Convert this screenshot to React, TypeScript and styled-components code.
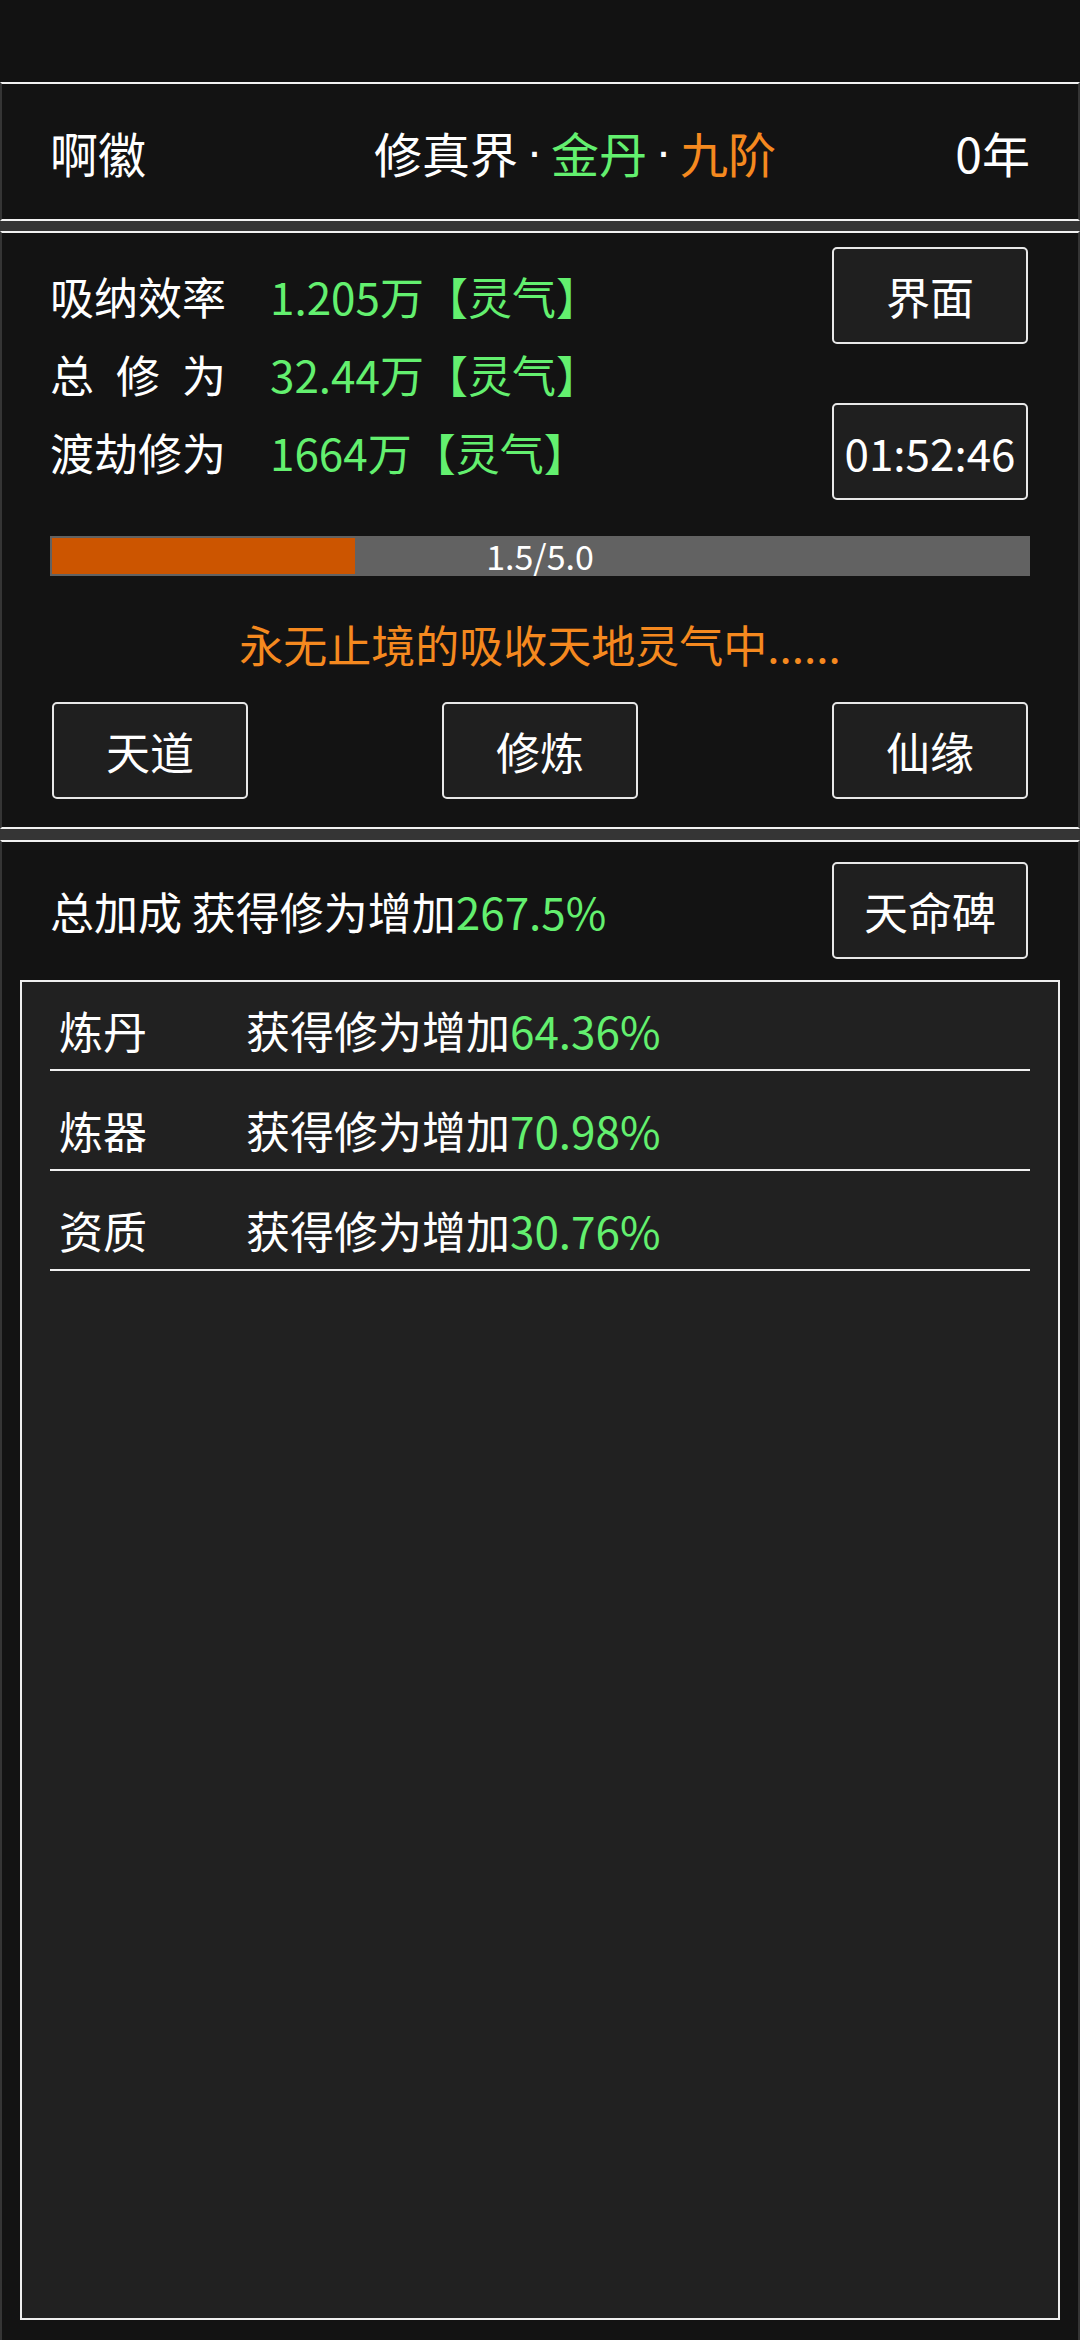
import React from "react";
import styled, { createGlobalStyle } from "styled-components";

const GREEN = "#63f06f";
const ORANGE = "#f5891f";

const GlobalStyle = createGlobalStyle`
  html, body { margin: 0; padding: 0; background: #353535; }
  body {
    font-family: "Noto Sans CJK SC", "Noto Sans", sans-serif;
    color: #ffffff;
  }
  * { box-sizing: border-box; }
`;

const Page = styled.div`
  min-height: 100vh;
  display: flex;
  flex-direction: column;
  background: #353535;
`;

const StatusBar = styled.div`
  height: 82px;
  flex-shrink: 0;
  background: #121212;
`;

const Panel = styled.section<{ $gap?: number; $open?: boolean; $grow?: boolean }>`
  margin-top: ${(p) => p.$gap ?? 0}px;
  background: #131313;
  border-top: 2px solid #f2f2f2;
  border-bottom: ${(p) => (p.$open ? "none" : "2px solid #f2f2f2")};
  border-left: 2px solid #353535;
  border-right: 2px solid #353535;
  flex-shrink: 0;
  ${(p) => (p.$grow ? "flex: 1; display: flex; flex-direction: column;" : "")}
`;

const HeaderBar = styled.header`
  height: 135px;
  padding: 0 48px;
  display: grid;
  grid-template-columns: 324px auto 1fr;
  align-items: center;
  font-size: 48px;
  line-height: 1;
`;

const Title = styled.div`
  display: flex;
  align-items: center;
  white-space: nowrap;
`;

const Tone = styled.span<{ $color?: string }>`
  color: ${(p) => p.$color ?? "#ffffff"};
`;

const Dot = styled.span`
  display: inline-flex;
  justify-content: center;
  align-items: center;
  width: 33px;
  font-family: "Liberation Sans", sans-serif;
  font-size: 48px;
  color: #ffffff;
`;

const Years = styled.div`
  justify-self: end;
`;

const CultivateBody = styled.div`
  padding: 14px 48px 28px;
  display: flex;
  flex-direction: column;
`;

const InfoRow = styled.div<{ $h: number }>`
  height: ${(p) => p.$h}px;
  display: flex;
  align-items: center;
  justify-content: space-between;
`;

const Stat = styled.div`
  display: flex;
  align-items: center;
  gap: 44px;
  font-size: 44px;
  line-height: 1;
  white-space: nowrap;
`;

const StatLabel = styled.div`
  width: 176px;
  display: flex;
  justify-content: space-between;
`;

const StatValue = styled.div`
  color: ${GREEN};
`;

const Button = styled.button`
  width: 196px;
  height: 97px;
  margin: 0 2px;
  padding: 0;
  flex-shrink: 0;
  display: flex;
  align-items: center;
  justify-content: center;
  border: 2px solid #e8e8e8;
  border-radius: 5px;
  background: #1f1f1f;
  color: #ffffff;
  font-family: inherit;
  font-size: 44px;
  line-height: 1;
`;

const Progress = styled.div`
  position: relative;
  height: 40px;
  margin-top: 36px;
  padding: 2px;
  background: #626262;
`;

const ProgressFill = styled.div`
  height: 100%;
  background: #cc5500;
`;

const ProgressLabel = styled.div`
  position: absolute;
  inset: 0;
  display: flex;
  align-items: center;
  justify-content: center;
  font-size: 34px;
  line-height: 1;
  color: #ffffff;
`;

const Message = styled.div`
  margin-top: 36px;
  line-height: 64px;
  font-size: 44px;
  text-align: center;
  color: ${ORANGE};
`;

const ButtonRow = styled.div`
  margin-top: 26px;
  display: flex;
  justify-content: space-between;
`;

const BonusBody = styled.div`
  flex: 1;
  display: flex;
  flex-direction: column;
  padding: 20px 18px;
`;

const BonusHeader = styled.div`
  height: 97px;
  padding: 0 30px;
  display: flex;
  align-items: center;
  justify-content: space-between;
  font-size: 44px;
  line-height: 1;
  white-space: nowrap;
`;

const BonusList = styled.div`
  flex: 1;
  margin-top: 21px;
  padding: 0 28px;
  border: 2px solid #efefef;
  background: #212121;
`;

const BonusRow = styled.div`
  height: 100px;
  padding-top: 20px;
  display: grid;
  grid-template-columns: 196px 1fr;
  border-bottom: 2px solid #f0f0f0;
  font-size: 44px;
  line-height: 78px;
  white-space: nowrap;

  &:first-child {
    height: 89px;
    padding-top: 9px;
  }
`;

const BonusName = styled.div`
  padding-left: 9px;
`;

const stats = [
  { label: ["吸", "纳", "效", "率"], value: "1.205万【灵气】", h: 97, button: "界面" },
  { label: ["总", "修", "为"], value: "32.44万【灵气】", h: 59 },
  { label: ["渡", "劫", "修", "为"], value: "1664万【灵气】", h: 97, button: "01:52:46" },
];

const bonuses = [
  { name: "炼丹", value: "64.36%" },
  { name: "炼器", value: "70.98%" },
  { name: "资质", value: "30.76%" },
];

const current = 1.5;
const max = 5.0;

export default function App() {
  const pct = (current / max) * 100 + 1;
  return (
    <>
      <GlobalStyle />
      <Page>
        <StatusBar />
        <Panel>
          <HeaderBar>
            <div>啊徽</div>
            <Title>
              <Tone>修真界</Tone>
              <Dot>·</Dot>
              <Tone $color={GREEN}>金丹</Tone>
              <Dot>·</Dot>
              <Tone $color={ORANGE}>九阶</Tone>
            </Title>
            <Years>0年</Years>
          </HeaderBar>
        </Panel>

        <Panel $gap={10}>
          <CultivateBody>
            {stats.map((s) => (
              <InfoRow key={s.value} $h={s.h}>
                <Stat>
                  <StatLabel>
                    {s.label.map((c, i) => (
                      <span key={i}>{c}</span>
                    ))}
                  </StatLabel>
                  <StatValue>{s.value}</StatValue>
                </Stat>
                {s.button && <Button>{s.button}</Button>}
              </InfoRow>
            ))}
            <Progress>
              <ProgressFill style={{ width: `${pct}%` }} />
              <ProgressLabel>
                {current.toFixed(1)}/{max.toFixed(1)}
              </ProgressLabel>
            </Progress>
            <Message>永无止境的吸收天地灵气中......</Message>
            <ButtonRow>
              <Button>天道</Button>
              <Button>修炼</Button>
              <Button>仙缘</Button>
            </ButtonRow>
          </CultivateBody>
        </Panel>

        <Panel $gap={11} $grow $open>
          <BonusBody>
            <BonusHeader>
              <div>
                总加成 获得修为增加<Tone $color={GREEN}>267.5%</Tone>
              </div>
              <Button>天命碑</Button>
            </BonusHeader>
            <BonusList>
              {bonuses.map((b) => (
                <BonusRow key={b.name}>
                  <BonusName>{b.name}</BonusName>
                  <div>
                    获得修为增加<Tone $color={GREEN}>{b.value}</Tone>
                  </div>
                </BonusRow>
              ))}
            </BonusList>
          </BonusBody>
        </Panel>
      </Page>
    </>
  );
}
